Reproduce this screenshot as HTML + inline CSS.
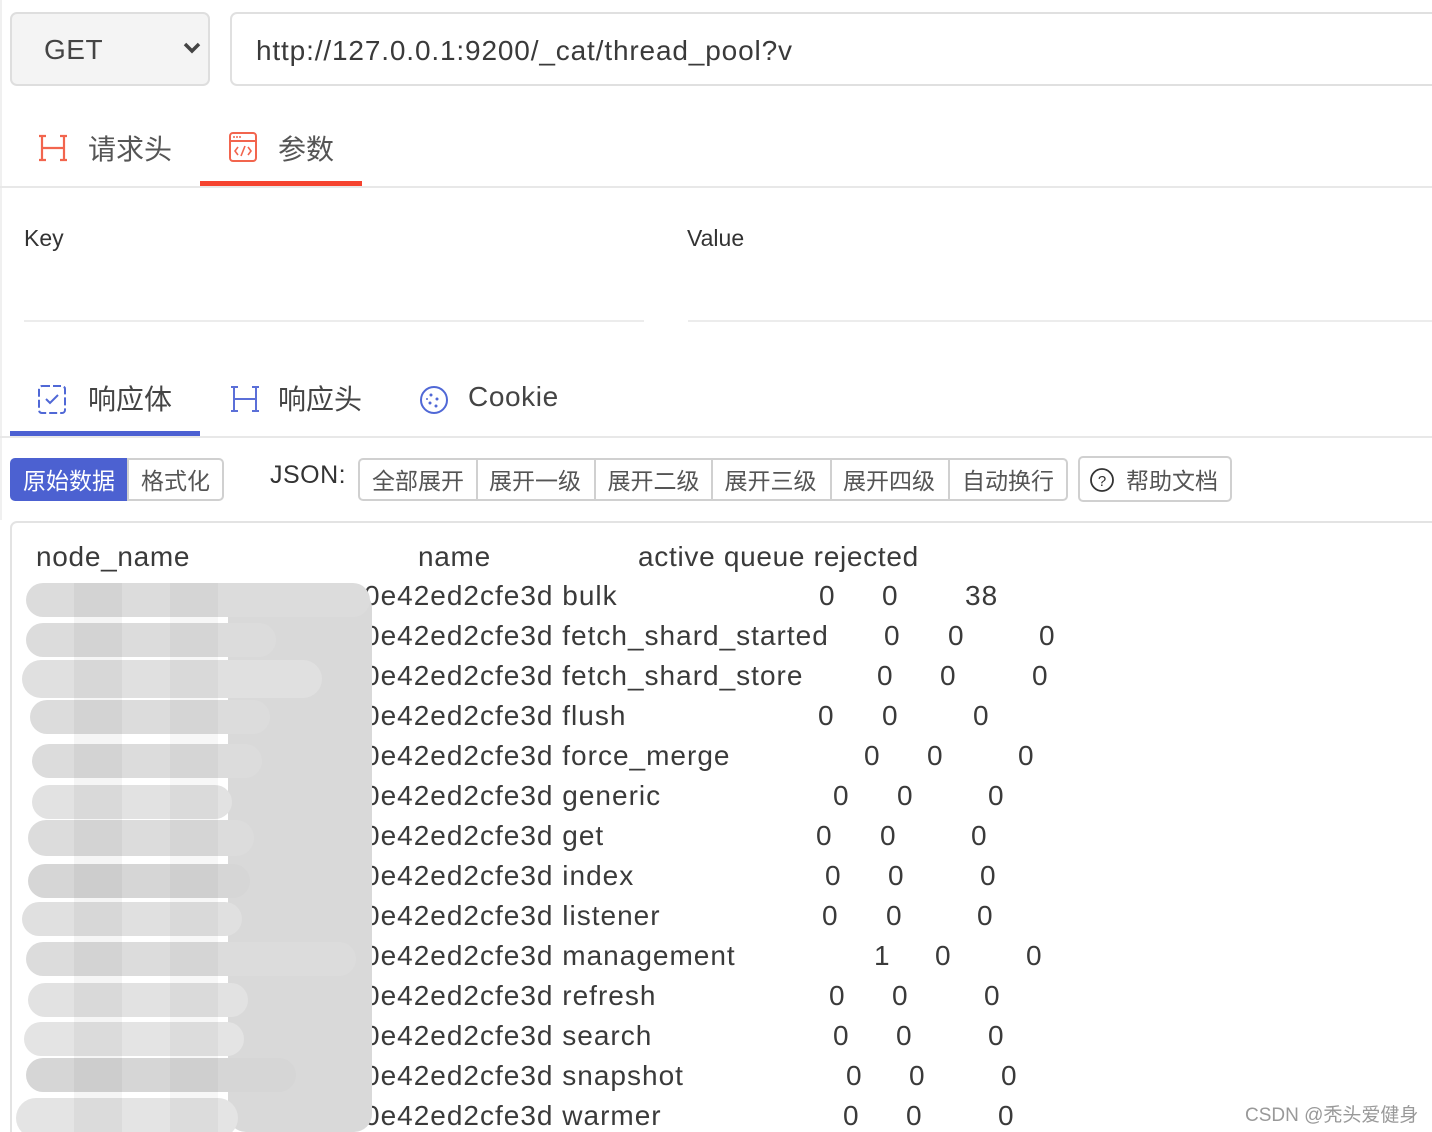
<!DOCTYPE html>
<html style="overflow:hidden;width:1432px;height:1132px"><head><meta charset="utf-8">
<style>
*{margin:0;padding:0;box-sizing:border-box}
body{width:1432px;height:1132px;position:relative;overflow:hidden;background:#fff;font-family:"Liberation Sans","Noto Sans CJK SC",sans-serif;color:#333}
.a{position:absolute;white-space:nowrap}
.hl{position:absolute;height:2px;background:#e6e6e6}
.t{position:absolute;font-size:28px;line-height:40px;color:#3a3a3a;white-space:nowrap;letter-spacing:1px}
.g{position:absolute;background:#dcdcdc;border-radius:20px}
.btn{position:absolute;top:458px;height:43px;border:2px solid #d0d0d0;font-size:23px;line-height:39px;color:#555;text-align:center;font-family:"Noto Sans CJK SC",sans-serif}
</style></head><body>
<div class="a" style="left:0;top:0;width:2px;height:520px;background:#f0f0f0"></div>
<div class="a" style="left:10px;top:12px;width:200px;height:74px;background:#f4f4f4;border:2px solid #dedede;border-radius:7px"></div>
<div class="a" style="left:44px;top:34px;font-size:28px;color:#444;letter-spacing:0.5px">GET</div>
<svg class="a" style="left:182px;top:40px" width="20" height="16" viewBox="0 0 20 16"><path d="M3 4 L10 11 L17 4" stroke="#444" stroke-width="3.5" fill="none"/></svg>
<div class="a" style="left:230px;top:12px;width:1220px;height:74px;border:2px solid #e0e0e0;border-radius:7px"></div>
<div class="a" style="left:256px;top:35px;font-size:28px;color:#3a3a3a;letter-spacing:0.85px">http://127.0.0.1:9200/_cat/thread_pool?v</div>
<svg class="a" style="left:38px;top:134px" width="30" height="28" viewBox="0 0 30 28"><path d="M4 2v24M26 2v24M4 14h22M1 2h7M1 26h7M22 2h7M22 26h7" stroke="#f2654e" stroke-width="2.2" fill="none"/></svg>
<div class="a" style="left:88px;top:128px;font-size:28px;color:#555;font-family:'Noto Sans CJK SC',sans-serif">请求头</div>
<svg class="a" style="left:228px;top:131px" width="30" height="32" viewBox="0 0 30 32"><rect x="2" y="2" width="26" height="28" rx="3" stroke="#f2654e" stroke-width="2" fill="none"/><path d="M2 10h26" stroke="#f2654e" stroke-width="2"/><circle cx="6" cy="6" r="1" fill="#f2654e"/><circle cx="9" cy="6" r="1" fill="#f2654e"/><circle cx="12" cy="6" r="1" fill="#f2654e"/><path d="M10 16l-3 4 3 4M20 16l3 4-3 4M17 15l-4 10" stroke="#f2654e" stroke-width="1.6" fill="none"/></svg>
<div class="a" style="left:278px;top:128px;font-size:28px;color:#555;font-family:'Noto Sans CJK SC',sans-serif">参数</div>
<div class="a" style="left:200px;top:181px;width:162px;height:5px;background:#f5432f"></div>
<div class="hl" style="left:0;top:186px;width:1432px;background:#e8e8e8"></div>
<div class="a" style="left:24px;top:225px;font-size:23px;color:#333">Key</div>
<div class="a" style="left:687px;top:225px;font-size:23px;color:#333">Value</div>
<div class="hl" style="left:24px;top:320px;width:620px;background:#ececec"></div>
<div class="hl" style="left:688px;top:320px;width:744px;background:#ececec"></div>
<svg class="a" style="left:36px;top:383px" width="34" height="32" viewBox="0 0 34 32"><rect x="3" y="3" width="26" height="27" rx="3" stroke="#5068d6" stroke-width="2" fill="none" stroke-dasharray="8 3"/><path d="M10 16l4 4 8-8" stroke="#5068d6" stroke-width="2" fill="none"/></svg>
<div class="a" style="left:88px;top:378px;font-size:28px;color:#444;font-family:'Noto Sans CJK SC',sans-serif">响应体</div>
<svg class="a" style="left:230px;top:385px" width="30" height="28" viewBox="0 0 30 28"><path d="M4 2v24M26 2v24M4 14h22M1 2h7M1 26h7M22 2h7M22 26h7" stroke="#5b6fd8" stroke-width="2" fill="none"/></svg>
<div class="a" style="left:278px;top:378px;font-size:28px;color:#444;font-family:'Noto Sans CJK SC',sans-serif">响应头</div>
<svg class="a" style="left:418px;top:384px" width="32" height="32" viewBox="0 0 32 32"><circle cx="16" cy="16" r="13" stroke="#5068d6" stroke-width="2" fill="none"/><circle cx="13" cy="11" r="1.5" fill="#5068d6"/><circle cx="19" cy="15" r="1.5" fill="#5068d6"/><circle cx="12" cy="19" r="1.5" fill="#5068d6"/><circle cx="18" cy="22" r="1.5" fill="#5068d6"/><circle cx="9" cy="15" r="1" fill="#5068d6"/></svg>
<div class="a" style="left:468px;top:381px;font-size:28px;color:#444;letter-spacing:0.6px">Cookie</div>
<div class="a" style="left:10px;top:431px;width:190px;height:5px;background:#4c60d2"></div>
<div class="hl" style="left:0;top:436px;width:1432px;background:#e8e8e8"></div>
<div class="a" style="left:10px;top:458px;width:118px;height:43px;background:#4c61d1;border-radius:5px 0 0 5px;color:#fff;font-size:23px;line-height:43px;text-align:center;font-family:'Noto Sans CJK SC',sans-serif">原始数据</div>
<div class="btn" style="left:127px;width:97px;border-radius:0 5px 5px 0">格式化</div>
<div class="a" style="left:270px;top:461px;font-size:25px;color:#333;letter-spacing:0.5px">JSON:</div>
<div class="btn" style="left:358px;width:120px;border-radius:5px 0 0 5px">全部展开</div>
<div class="btn" style="left:476px;width:120px;border-left:none">展开一级</div>
<div class="btn" style="left:594px;width:119px">展开二级</div>
<div class="btn" style="left:711px;width:121px;border-left:none">展开三级</div>
<div class="btn" style="left:830px;width:120px;border-left:none">展开四级</div>
<div class="btn" style="left:948px;width:120px;border-radius:0 5px 5px 0">自动换行</div>
<div class="btn" style="left:1078px;top:456px;width:154px;height:46px;border-radius:5px;padding-left:34px;line-height:42px">帮助文档</div>
<svg class="a" style="left:1089px;top:467px" width="26" height="26" viewBox="0 0 26 26"><circle cx="13" cy="13" r="11" stroke="#333" stroke-width="1.8" fill="none"/><text x="13" y="19" font-size="15" text-anchor="middle" fill="#333" font-family="Liberation Sans">?</text></svg>
<div class="a" style="left:10px;top:521px;width:1440px;height:620px;border:2px solid #e3e3e3;border-radius:7px"></div>
<div class="t" style="left:36px;top:537px;letter-spacing:0.7px">node_name</div>
<div class="t" style="left:418px;top:537px;letter-spacing:0.7px">name</div>
<div class="t" style="left:638px;top:537px;letter-spacing:0.7px">active queue rejected</div>

<div class="t" style="left:364px;top:576px">0e42ed2cfe3d bulk</div><div class="t" style="left:819px;top:576px">0</div><div class="t" style="left:882px;top:576px">0</div><div class="t" style="left:965px;top:576px">38</div>
<div class="t" style="left:364px;top:616px">0e42ed2cfe3d fetch_shard_started</div><div class="t" style="left:884px;top:616px">0</div><div class="t" style="left:948px;top:616px">0</div><div class="t" style="left:1039px;top:616px">0</div>
<div class="t" style="left:364px;top:656px">0e42ed2cfe3d fetch_shard_store</div><div class="t" style="left:877px;top:656px">0</div><div class="t" style="left:940px;top:656px">0</div><div class="t" style="left:1032px;top:656px">0</div>
<div class="t" style="left:364px;top:696px">0e42ed2cfe3d flush</div><div class="t" style="left:818px;top:696px">0</div><div class="t" style="left:882px;top:696px">0</div><div class="t" style="left:973px;top:696px">0</div>
<div class="t" style="left:364px;top:736px">0e42ed2cfe3d force_merge</div><div class="t" style="left:864px;top:736px">0</div><div class="t" style="left:927px;top:736px">0</div><div class="t" style="left:1018px;top:736px">0</div>
<div class="t" style="left:364px;top:776px">0e42ed2cfe3d generic</div><div class="t" style="left:833px;top:776px">0</div><div class="t" style="left:897px;top:776px">0</div><div class="t" style="left:988px;top:776px">0</div>
<div class="t" style="left:364px;top:816px">0e42ed2cfe3d get</div><div class="t" style="left:816px;top:816px">0</div><div class="t" style="left:880px;top:816px">0</div><div class="t" style="left:971px;top:816px">0</div>
<div class="t" style="left:364px;top:856px">0e42ed2cfe3d index</div><div class="t" style="left:825px;top:856px">0</div><div class="t" style="left:888px;top:856px">0</div><div class="t" style="left:980px;top:856px">0</div>
<div class="t" style="left:364px;top:896px">0e42ed2cfe3d listener</div><div class="t" style="left:822px;top:896px">0</div><div class="t" style="left:886px;top:896px">0</div><div class="t" style="left:977px;top:896px">0</div>
<div class="t" style="left:364px;top:936px">0e42ed2cfe3d management</div><div class="t" style="left:874px;top:936px">1</div><div class="t" style="left:935px;top:936px">0</div><div class="t" style="left:1026px;top:936px">0</div>
<div class="t" style="left:364px;top:976px">0e42ed2cfe3d refresh</div><div class="t" style="left:829px;top:976px">0</div><div class="t" style="left:892px;top:976px">0</div><div class="t" style="left:984px;top:976px">0</div>
<div class="t" style="left:364px;top:1016px">0e42ed2cfe3d search</div><div class="t" style="left:833px;top:1016px">0</div><div class="t" style="left:896px;top:1016px">0</div><div class="t" style="left:988px;top:1016px">0</div>
<div class="t" style="left:364px;top:1056px">0e42ed2cfe3d snapshot</div><div class="t" style="left:846px;top:1056px">0</div><div class="t" style="left:909px;top:1056px">0</div><div class="t" style="left:1001px;top:1056px">0</div>
<div class="t" style="left:364px;top:1096px">0e42ed2cfe3d warmer</div><div class="t" style="left:843px;top:1096px">0</div><div class="t" style="left:906px;top:1096px">0</div><div class="t" style="left:998px;top:1096px">0</div>

<div class="g" style="left:228px;top:590px;width:144px;height:542px;border-radius:18px;background:#d9d9d9"></div>
<div class="g" style="left:26px;top:583px;width:344px;height:34px"></div>
<div class="g" style="left:26px;top:623px;width:250px;height:34px"></div>
<div class="g" style="left:22px;top:660px;width:300px;height:38px;background:#e0e0e0"></div>
<div class="g" style="left:30px;top:700px;width:240px;height:34px"></div>
<div class="g" style="left:32px;top:744px;width:230px;height:34px"></div>
<div class="g" style="left:32px;top:785px;width:200px;height:34px;background:#e2e2e2"></div>
<div class="g" style="left:28px;top:820px;width:226px;height:36px"></div>
<div class="g" style="left:28px;top:864px;width:222px;height:34px;background:#d6d6d6"></div>
<div class="g" style="left:22px;top:902px;width:220px;height:34px;background:#e0e0e0"></div>
<div class="g" style="left:26px;top:942px;width:330px;height:34px"></div>
<div class="g" style="left:28px;top:983px;width:220px;height:34px;background:#e2e2e2"></div>
<div class="g" style="left:24px;top:1022px;width:220px;height:34px;background:#e4e4e4"></div>
<div class="g" style="left:26px;top:1058px;width:270px;height:34px;background:#d6d6d6"></div>
<div class="g" style="left:16px;top:1098px;width:222px;height:40px;background:#e4e4e4"></div>
<div class="a" style="left:74px;top:583px;width:48px;height:549px;background:rgba(0,0,0,0.04)"></div>
<div class="a" style="left:170px;top:583px;width:48px;height:549px;background:rgba(0,0,0,0.03)"></div>

<div class="a" style="left:1245px;top:1100px;font-size:19px;color:#999;font-family:'Liberation Sans','Noto Sans CJK SC',sans-serif">CSDN @秃头爱健身</div>
</body></html>
